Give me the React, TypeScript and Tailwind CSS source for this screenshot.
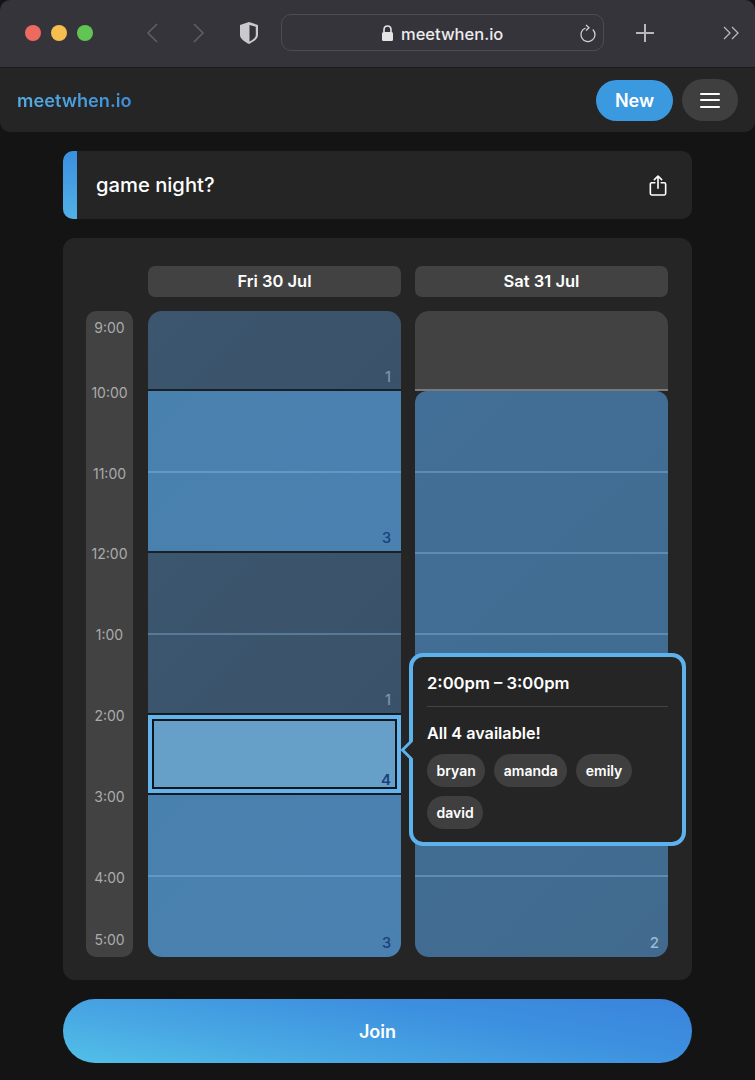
import React from "react";

const Ln = ({ c }: { c: string }) => <div className={"h-[2px] shrink-0 " + c} />;

function Cell({ n, tone, h, round = "", pos = "bottom-[4px]" }: { n?: string; tone: string; h: string; round?: string; pos?: string }) {
  return (
    <div className={"relative " + h + " " + tone + " " + round}>
      {n && <span className={"absolute right-[10px] text-[14.500px] leading-[16px] font-medium " + pos}>{n}</span>}
    </div>
  );
}

const Browser = () => (
  <div className="h-[68px] shrink-0 bg-[#35343a] border-b border-[#1b1b1d] rounded-t-[10px] flex items-center relative pb-[2px]">
    <div className="flex items-center gap-[10px] ml-[25px]">
      <span className="w-[16px] h-[16px] rounded-full bg-[#ec6a5e]" />
      <span className="w-[16px] h-[16px] rounded-full bg-[#f4bf4f]" />
      <span className="w-[16px] h-[16px] rounded-full bg-[#61c554]" />
    </div>
    <svg className="ml-[52px]" width="14" height="22" viewBox="0 0 14 22" fill="none" stroke="#5f5e64" strokeWidth="1.6"><path d="M12 2 L3 11 L12 20" /></svg>
    <svg className="ml-[33px]" width="14" height="22" viewBox="0 0 14 22" fill="none" stroke="#5f5e64" strokeWidth="1.6"><path d="M2 2 L11 11 L2 20" /></svg>
    <svg className="ml-[33px]" width="20" height="24" viewBox="0 0 20 24">
      <path d="M10 1 L19 4 V14 C19 18 14 21 10 23 C6 21 1 18 1 14 V4 Z" fill="#c9c9ce" />
      <path d="M10.500 4 L16.800 5.800 V14 C16.800 16.600 13.500 19 10.500 20.500 Z" fill="#35343a" />
    </svg>
    <div className="ml-[22px] w-[323px] h-[37px] border border-[#4d4c52] rounded-[10px] flex items-center relative">
      <svg className="absolute left-[99px] top-[10px]" width="13" height="17" viewBox="0 0 13 17">
        <path d="M3 7 V4.800 C3 2.600 4.500 1 6.500 1 C8.500 1 10 2.600 10 4.800 V7" fill="none" stroke="#e4e4e6" strokeWidth="1.600" />
        <rect x="1" y="7" width="11" height="9" rx="1.500" fill="#e4e4e6" />
      </svg>
      <span className="absolute left-[119px] top-[8px] text-[16.500px] leading-[22px] font-medium text-[#ececee]">meetwhen.io</span>
      <svg className="absolute right-[6px] top-[9px]" width="18" height="19" viewBox="0 0 18 19" fill="none" stroke="#d0d0d3" strokeWidth="1.300">
        <path d="M13.800 5.500 A7 7 0 1 1 6.500 4" />
        <path d="M7 1 L10 3.800 L7 6.500" />
      </svg>
    </div>
    <svg className="ml-[31px]" width="20" height="20" viewBox="0 0 20 20" stroke="#b8b8bc" strokeWidth="2"><path d="M10 1 V19 M1 10 H19" /></svg>
    <svg className="ml-[68px]" width="17" height="16" viewBox="0 0 17 16" fill="none" stroke="#b8b8bc" strokeWidth="1.300"><path d="M1 2 L7 8 L1 14 M9 2 L15 8 L9 14" /></svg>
  </div>
);

const Header = () => (
  <div className="h-[64px] shrink-0 bg-[#252525] rounded-b-[10px] flex items-center justify-between pl-[17px] pr-[17px]">
    <span className="text-[18.200px] font-semibold pt-[1px] bg-[linear-gradient(90deg,#55aee2,#3f8fd8)] bg-clip-text text-transparent">meetwhen.io</span>
    <div className="flex items-center gap-[9px]">
      <button className="w-[77px] h-[41px] rounded-full bg-[#3b99e0] text-white text-[18px] font-semibold">New</button>
      <button className="w-[56px] h-[42px] rounded-full bg-[#3f3f3f] flex flex-col items-center justify-center gap-[4.500px]">
        <span className="w-[20px] h-[2px] bg-white rounded-full" />
        <span className="w-[20px] h-[2px] bg-white rounded-full" />
        <span className="w-[20px] h-[2px] bg-white rounded-full" />
      </button>
    </div>
  </div>
);

const Chip = ({ t }: { t: string }) => (
  <span className="h-[33px] px-[9.500px] rounded-full bg-[#3f3f3f] flex items-center text-[14px] font-semibold text-white">{t}</span>
);

const dim = "bg-[linear-gradient(135deg,#3c566f,#3a5269)] text-[#7f95a9]";
const bright = "bg-[linear-gradient(135deg,#4880ae,#4b81b0)] text-[#1a3f7a]";
const sat = "bg-[linear-gradient(135deg,#426f97,#416a8e)]";

const Times = () => (
  <div className="w-[47px] shrink-0 h-[646px] bg-[#424242] rounded-[10px] flex flex-col items-center pt-[9px] text-[14px] leading-[16px] text-[#ababab]">
    <span>9:00</span>
    <span className="mt-[49px]">10:00</span>
    <span className="mt-[65px]">11:00</span>
    <span className="mt-[64px]">12:00</span>
    <span className="mt-[65px]">1:00</span>
    <span className="mt-[65px]">2:00</span>
    <span className="mt-[65px]">3:00</span>
    <span className="mt-[65px]">4:00</span>
    <span className="mt-[46px]">5:00</span>
  </div>
);

const FriColumn = () => (
  <div className="flex-1 h-[646px] flex flex-col">
    <Cell n="1" tone={dim} h="h-[78px]" round="rounded-t-[14px]" />
    <Ln c="bg-[#1a2026]" />
    <Cell tone={bright} h="h-[80px]" />
    <Ln c="bg-[#6198c4]" />
    <Cell n="3" tone={bright} h="h-[78px]" pos="bottom-[5px]" />
    <Ln c="bg-[#1a2026]" />
    <Cell tone={dim} h="h-[80px]" />
    <Ln c="bg-[#587a98]" />
    <Cell n="1" tone={dim} h="h-[78px]" pos="bottom-[5px]" />
    <div className="h-[82px] shrink-0 bg-[#63b3ed] border-y-[2px] border-[#141a20] p-[4px]">
      <div className="relative h-full border-[2px] border-[#10161c] bg-[#66a0c8] text-[#1a3f7a]">
        <span className="absolute right-[4px] bottom-[-1px] text-[15px] leading-[16px] font-semibold">4</span>
      </div>
    </div>
    <Cell tone={bright} h="h-[80px]" />
    <Ln c="bg-[#6198c4]" />
    <Cell n="3" tone={bright} h="h-[80px]" round="rounded-b-[14px]" pos="bottom-[6px]" />
  </div>
);

const SatColumn = () => (
  <div className="flex-1 h-[646px] flex flex-col">
    <div className="h-[78px] shrink-0 bg-[#424242] rounded-t-[14px]" />
    <Ln c="bg-[#7a7a7a]" />
    <div className="h-[566px] bg-[#252525]">
      <div className={"h-full flex flex-col rounded-[12px] rounded-b-[14px] overflow-hidden " + sat}>
        <div className="h-[80px]" />
        <Ln c="bg-[#5e8bb3]" />
        <div className="h-[79px]" />
        <Ln c="bg-[#5e8bb3]" />
        <div className="h-[79px]" />
        <Ln c="bg-[#5e8bb3]" />
        <div className="h-[240px]" />
        <Ln c="bg-[#5e8bb3]" />
        <div className="relative flex-1">
          <span className="absolute right-[9px] bottom-[6px] text-[15px] leading-[16px] font-medium text-[#9dbbd6]">2</span>
        </div>
      </div>
    </div>
  </div>
);

const Popover = () => (
  <div className="absolute left-[346px] top-[415px] w-[277px] h-[193px] bg-[#252525] border-[4px] border-[#5db2ee] rounded-[14px] px-[14px] text-white">
    <svg className="absolute left-[-14px] top-[82px]" width="15" height="22" viewBox="0 0 15 22">
      <path d="M15 2 H13 L4 11 L13 20 H15 Z" fill="#252525" />
      <path d="M13 1.500 L3.500 11 L13 20.500" fill="none" stroke="#5db2ee" strokeWidth="3" />
    </svg>
    <div className="h-[50px] flex items-start pt-[14px] text-[16.600px] leading-[24px] font-semibold border-b border-[#444]">2:00pm – 3:00pm</div>
    <div className="mt-[14px] text-[16.200px] leading-[24px] font-semibold">All 4 available!</div>
    <div className="mt-[9px] flex flex-wrap gap-x-[9px] gap-y-[9px]">
      <Chip t="bryan" />
      <Chip t="amanda" />
      <Chip t="emily" />
      <Chip t="david" />
    </div>
  </div>
);

export default function App() {
  return (
    <div className="w-[755px] h-[1080px] bg-[#141414] flex flex-col overflow-hidden [font-family:Inter,sans-serif]">
      <Browser />
      <Header />
      <main className="mx-[63px] mt-[19px] flex flex-col gap-[19px]">
        <div className="h-[68px] rounded-[10px] bg-[#252525] overflow-hidden flex items-center">
          <div className="w-[14px] h-full bg-[linear-gradient(180deg,#3b8fdf,#52b0e6)]" />
          <h1 className="ml-[19px] text-[20.200px] font-medium text-white">game night?</h1>
          <svg className="ml-auto mr-[25px]" width="18" height="23" viewBox="0 0 20 24" fill="none" stroke="#fff" strokeWidth="1.800" strokeLinecap="round" strokeLinejoin="round">
            <path d="M6.500 9 H3 A1.500 1.500 0 0 0 1.500 10.500 V21 A1.500 1.500 0 0 0 3 22.500 H17 A1.500 1.500 0 0 0 18.500 21 V10.500 A1.500 1.500 0 0 0 17 9 H13.500" />
            <path d="M10 15 V2 M6 5.500 L10 1.500 L14 5.500" />
          </svg>
        </div>
        <div className="relative h-[742px] rounded-[12px] bg-[#252525] pt-[28px] pl-[23px] pr-[24px]">
          <div className="flex gap-[14px] pl-[62px] h-[31px]">
            <div className="flex-1 rounded-[7px] bg-[#424242] text-white text-[16.500px] font-semibold flex items-center justify-center">Fri 30 Jul</div>
            <div className="flex-1 rounded-[7px] bg-[#424242] text-white text-[16.500px] font-semibold flex items-center justify-center">Sat 31 Jul</div>
          </div>
          <div className="flex mt-[14px]">
            <Times />
            <div className="flex-1 flex gap-[14px] ml-[15px]">
              <FriColumn />
              <SatColumn />
            </div>
          </div>
          <Popover />
        </div>
        <button className="h-[64px] pt-[1px] rounded-full bg-[linear-gradient(190deg,#3984dc_0%,#3c8fdf_32%,#48a6e3_68%,#52c0e8_100%)] text-white text-[18px] font-semibold">Join</button>
      </main>
    </div>
  );
}
